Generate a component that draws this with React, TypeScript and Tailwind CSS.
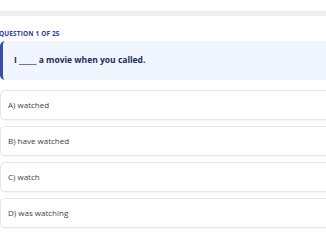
export default function App() {
  const options = ['A) watched', 'B) have watched', 'C) watch', 'D) was watching'];
  return (
    <div className="w-[326px] h-[245px] overflow-hidden bg-white" style={{ fontFamily: '"Open Sans", sans-serif' }}>
      <div className="pt-[11px]">
        <div className="h-[5px] bg-[#eeeeee]" />
      </div>
      <div className="ml-[-1px] w-[360px]">
        <div className="mt-[13px] text-[6.5px] leading-[10px] font-bold uppercase text-[#2e3f8f] tracking-[0.02em]">
          Question 1 of 25
        </div>
        <div className="mt-[2px] ml-[1px] h-[39px] flex items-center bg-[#f1f5fe] border-l-[3px] border-[#3a4ea6] rounded-l-[5px] pl-[11px]">
          <span className="text-[8.5px] font-bold text-[#1f2b5c]">I _____ a movie when you called.</span>
        </div>
        <div className="mt-[10px] ml-[1px] flex flex-col gap-[6px]">
          {options.map((o) => (
            <div
              key={o}
              className="h-[30px] flex items-center px-[7px] border border-[#e6e6e6] rounded-[5px] shadow-[0_1px_2px_rgba(0,0,0,0.04)] text-[8px] text-[#3f3f3f]"
            >
              {o}
            </div>
          ))}
        </div>
      </div>
    </div>
  );
}
